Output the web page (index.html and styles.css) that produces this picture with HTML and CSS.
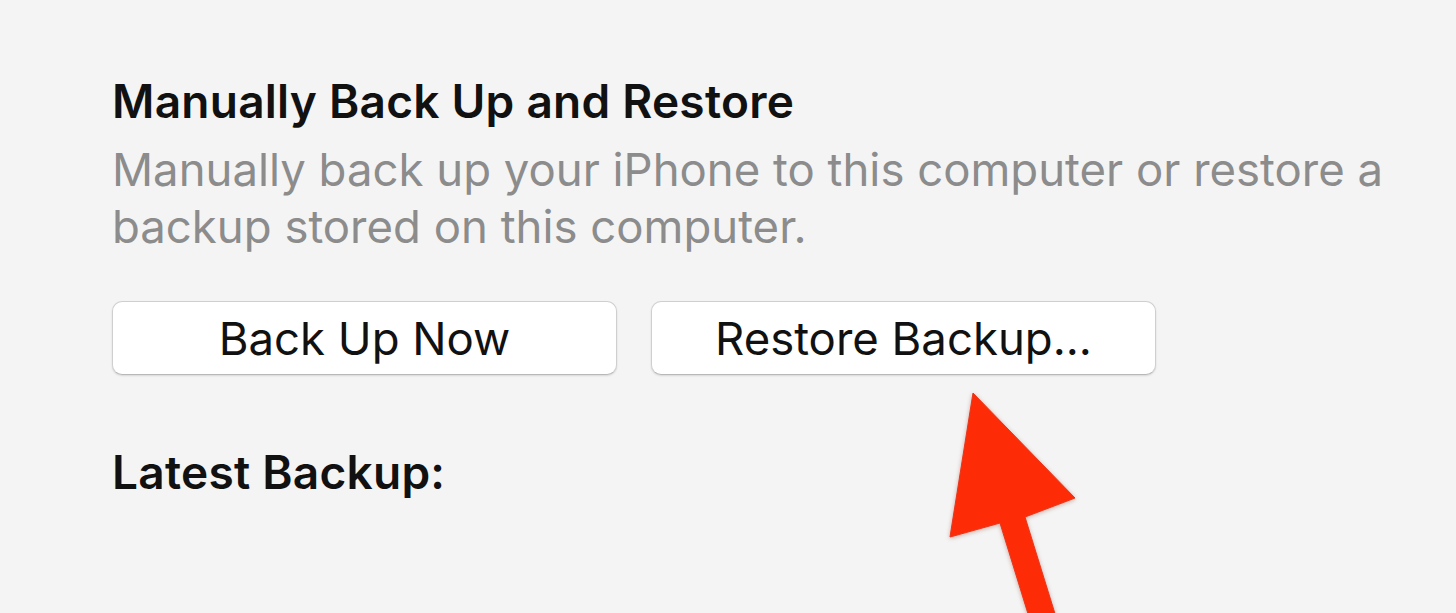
FILE: index.html
```html
<!DOCTYPE html>
<html lang="en">
<head>
    <meta charset="UTF-8">
    <meta name="viewport" content="width=device-width, initial-scale=1.0">
    <title>Backups</title>
    <link rel="stylesheet" href="styles.css">
</head>
<body>
    <div class="backups">
        <h2 class="title">Manually Back Up and Restore</h2>
        <p class="desc">Manually back up your iPhone to this computer or restore a backup stored on this computer.</p>

        <div class="actions">
            <button type="button" class="btn">Back Up Now</button>
            <button type="button" class="btn">Restore Backup...</button>
        </div>

        <h2 class="title latest">Latest Backup:</h2>
    </div>

    <!-- red pointer over the restore button -->
    <svg class="pointer" width="150" height="230" viewBox="0 0 150 230">
        <polygon points="33,8 10,152 60,138 89,232 116,232 85,132 135,113" fill="#fe2c06" stroke="#e8361c" stroke-width="1" stroke-linejoin="round"/>
    </svg>
</body>
</html>
```

FILE: styles.css
```css
body {
    margin: 0;
    background-color: #f4f4f4;
    font-family: Inter, "Liberation Sans", Arial, sans-serif;
    overflow: hidden;
}

.backups {
    padding: 75px 0 0 112px;
}

.title {
    margin: 0;
    font-size: 46px;
    font-weight: 600;
    letter-spacing: 0.25px;
    color: #111;
    line-height: 52px;
}

.desc {
    margin: 14px 0 0;
    width: 1320px;
    font-size: 45.5px;
    line-height: 57px;
    color: #8c8c8c;
}

.actions {
    display: flex;
    gap: 34px;
    margin-top: 46px;
}

.btn {
    width: 505px;
    height: 74px;
    background-color: #fff;
    border: 1px solid #cfcfcf;
    border-bottom-color: #b8b8b8;
    border-radius: 10px;
    box-shadow: 0 1px 2px rgba(0, 0, 0, 0.12);
    font-family: Inter, "Liberation Sans", Arial, sans-serif;
    font-size: 45.5px;
    color: #111;
    padding: 0;
}

.latest {
    margin-top: 71px;
}

.pointer {
    position: absolute;
    left: 940px;
    top: 385px;
    filter: drop-shadow(0 1px 2px rgba(120, 30, 0, 0.35));
}
```
